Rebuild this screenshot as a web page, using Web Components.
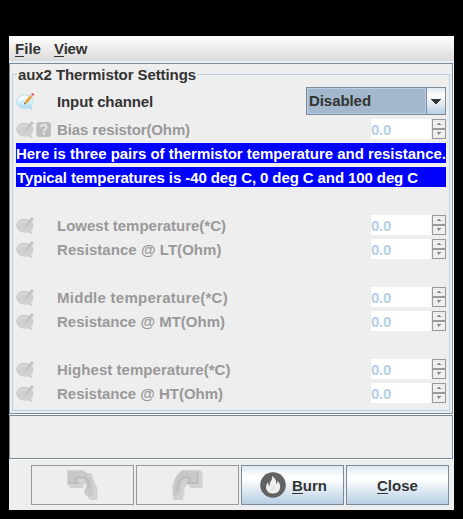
<!DOCTYPE html>
<html lang="en"><head><meta charset="utf-8"><title>aux2 Thermistor Settings</title>
<style>
html,body{margin:0;background:#000}
body{width:463px;height:519px;padding:36px 9px 9px;box-sizing:border-box;font:bold 15px/20px "Liberation Sans",Arial,sans-serif;color:#333;overflow:hidden}
</style></head><body>
<settings-window></settings-window>
<script>
const define = (name, html, setup) => customElements.define(name, class extends HTMLElement {
  connectedCallback() {
    if (this.shadowRoot) return;
    const root = this.attachShadow({mode: 'open'});
    root.innerHTML = html;
    if (setup) setup.call(this, root);
  }
});

// Text run spaced to a given advance width; the "key" attribute underlines the first letter.
define('ui-text', `<style>:host{display:block;white-space:pre}span{display:inline-block}u{text-decoration:none;border-bottom:1px solid currentColor;display:inline-block;line-height:15px}</style><span></span>`, function (root) {
  const s = root.querySelector('span'), t = this.getAttribute('text');
  if (this.hasAttribute('key')) {
    const u = document.createElement('u');
    u.textContent = t[0];
    s.append(u, t.slice(1));
  } else s.textContent = t;
  const w = +this.getAttribute('w');
  s.style.letterSpacing = (w - s.getBoundingClientRect().width) / t.length + 'px';
});

define('note-icon', `<style>:host{display:block;width:20px;height:20px}svg{display:block}</style>
<svg width="20" height="20" viewBox="0 -.6 20 20"></svg>`, function (root) {
  root.querySelector('svg').innerHTML = this.hasAttribute('off')
    ? `<ellipse cx="8.800" cy="10" rx="8.700" ry="7.200" fill="#d0d0d0"/><path d="M10 15L17 12L15.500 15.500L16.500 19L11 16.500Z" fill="#d0d0d0"/><path d="M3 8.500Q6 5 12 6" stroke="#d8d8d8" stroke-width="2" fill="none"/><path d="M8 12.500L9.500 9L15.500 1.500L18 3.500L12 10.500Z" fill="#c6c6c6"/><path d="M9.500 11.500L16 3.500" stroke="#bcbcbc"/>`
    : `<defs><linearGradient id="g" x2="0" y2="1"><stop stop-color="#e8f7fc"/><stop offset=".55" stop-color="#d3effa"/><stop offset="1" stop-color="#a5daf0"/></linearGradient></defs><path d="M11 15L16.500 12.500L15.200 15.500L16.300 18.500L11 16Z" fill="#a9d9ec"/><ellipse cx="8.800" cy="10" rx="8.300" ry="6.800" fill="url(#g)" stroke="#b5dcea" stroke-width=".8"/><path d="M3 9Q6 5 11 6" stroke="#fafeff" stroke-width="2" fill="none"/><path d="M8 12.800L9.200 9.200L14 3.500L16.500 5.500L11.500 11.500Z" fill="#f3b45c"/><path d="M10.800 10.500L15.500 4.700" stroke="#dc8b32"/><path d="M8 12.800L8.600 10.900L10 12Z" fill="#555"/><path d="M14 3.500L15 2.300L17.400 4.300L16.500 5.500Z" fill="#cfdde6"/><path d="M15 2.300Q17 .7 18 2.500Q18.300 3.500 17.400 4.300Z" fill="#e0484f"/>`;
});

define('help-icon', `<style>:host{display:block;width:16px;height:20px}svg{display:block}</style>
<svg width="16" height="20"><rect x=".3" y="3" width="14.700" height="15" rx="3" fill="#bebebe"/><path d="M5 8Q5 5.800 7.700 5.800Q10.500 5.800 10.500 8.200Q10.500 9.700 8.800 10.500Q7.800 11 7.800 12.800" fill="none" stroke="#e3e3e3" stroke-width="2.200"/><rect x="6.700" y="13.800" width="2.300" height="2.200" fill="#e3e3e3"/></svg>`);

define('number-spinner', `<style>
:host{display:grid;grid-template-columns:60px 14px;column-gap:1px;height:20px;color:#b8cfe5}
.f{background:#fff;padding-top:1px;height:19px}
svg{display:block}</style>
<div class="f"><ui-text text="0.0" w="20"></ui-text></div>
<svg width="14" height="20" shape-rendering="crispEdges"><path d="M.5 .5H13.500V19.500H.5ZM0 9.500H14M0 10.500H14" fill="none" stroke="#999"/><path d="M6 4h2v1h1v1H5V5h1ZM5 13h4v1H8v1h-1v1H6v-2H5Z" fill="#888"/></svg>`);

define('field-row', `<style>
:host{display:grid;grid-template-columns:20px 21px 1fr auto;height:20px;color:#999}
ui-text{padding-top:1px}</style>
<note-icon off></note-icon><div class="h"></div><number-spinner></number-spinner>`, function (root) {
  const n = document.createElement('ui-text');
  n.setAttribute('text', this.getAttribute('text'));
  n.setAttribute('w', this.getAttribute('w'));
  root.querySelector('number-spinner').before(n);
  if (this.hasAttribute('help')) root.querySelector('.h').append(document.createElement('help-icon'));
});

define('note-row', `<style>:host{display:block;box-sizing:border-box;height:20px;padding-top:1px;background:#00f;color:#fff}</style><slot></slot>`);

define('combo-box', `<style>
:host{display:grid;grid-template-columns:1fr 19px;box-sizing:border-box;width:140px;height:28px;border:1px solid #7a8a99}
.v{border:1px solid #b8cfe5;background:#a3b8cc;padding:2px 0 0 1px}
.a{border-left:1px solid #7a8a99;background:linear-gradient(#dfe9f2,#fff 30%,#fff 32%,#b8cfe5);display:grid;place-items:center}
svg{display:block}</style>
<div class="v"><slot></slot></div><div class="a"><svg width="10" height="5" shape-rendering="crispEdges"><path d="M0 0h10v1H9v1H8v1H7v1H6v1H4V4H3V3H2V2H1V1H0Z" fill="#333"/></svg></div>`);

define('group-box', `<style>
:host{display:block;box-sizing:border-box;border:1px solid #b8cfe5;height:337px;padding:0 3px}
header{width:180px;height:20px;margin:-9px 0 0 1px;padding-left:1px;background:#eee;box-sizing:border-box;line-height:18px}
main{display:flex;flex-direction:column;gap:4px;padding-top:1px}</style>
<header><slot name="title"></slot></header><main><slot></slot></main>`);

define('etched-panel', `<style>
:host{display:block;box-sizing:border-box;border:1px solid #7a8a99;margin-right:1px;box-shadow:1px 1px 0 #fff}
</style><slot></slot>`);

define('push-button', `<style>
:host{display:flex;align-items:center;justify-content:center;box-sizing:border-box;height:40px;border:1px solid #7a8a99;background:linear-gradient(#dfe9f2,#fff 30%,#fff 34%,#b8cfe5)}
:host([off]){border-color:#999;background:#eee}</style><slot></slot>`);

define('settings-window', `<style>
:host{display:flex;flex-direction:column;width:445px;height:474px;background:#eee}
nav{height:26px;box-sizing:border-box;padding:3px 6px 0;display:flex;gap:13px;background:linear-gradient(#fff,#dadada);border-bottom:1px solid #ededed;margin-bottom:1px}
.main{height:351px;padding:10px 2px 0 2px;box-sizing:border-box}
.status{height:44px;margin-top:1px}
.first{display:grid;grid-template-columns:41px 1fr auto;height:28px;align-items:center}
.first>ui-text,push-button ui-text{padding-top:2px}
.gap{height:20px}
footer{display:grid;grid-template-columns:repeat(4,103px);gap:2px;margin:6px 0 0 22px}
svg{display:block}
</style>
<nav><ui-text key text="File" w="26"></ui-text><ui-text key text="View" w="33"></ui-text></nav>
<etched-panel class="main"><group-box>
<ui-text slot="title" text="aux2 Thermistor Settings" w="178"></ui-text>
<div class="first"><note-icon></note-icon><ui-text text="Input channel" w="96"></ui-text><combo-box><ui-text text="Disabled" w="62"></ui-text></combo-box></div>
<field-row help text="Bias resistor(Ohm)" w="133"></field-row>
<note-row><ui-text text="Here is three pairs of thermistor temperature and resistance." w="430"></ui-text></note-row>
<note-row><ui-text style="padding-left:1px" text="Typical temperatures is -40 deg C, 0 deg C and 100 deg C" w="401"></ui-text></note-row>
<div class="gap"></div>
<field-row text="Lowest temperature(*C)" w="169"></field-row>
<field-row text="Resistance @ LT(Ohm)" w="164.500"></field-row>
<div class="gap"></div>
<field-row text="Middle temperature(*C)" w="171"></field-row>
<field-row text="Resistance @ MT(Ohm)" w="168"></field-row>
<div class="gap"></div>
<field-row text="Highest temperature(*C)" w="173.500"></field-row>
<field-row text="Resistance @ HT(Ohm)" w="166"></field-row>
</group-box></etched-panel>
<etched-panel class="status"></etched-panel>
<footer>
<push-button off><svg width="32" height="32" viewBox="-.5 -1 32 32"><path d="M0 0H15L20 3H24L26 9L28 15L30 18V30H23L17 24V19H19V14H16V18H3L0 15Z" fill="#d2d2d2"/><path d="M0 1H4L7 2L11 1H16Q25 5 25 17L26 26H22L17 22Q21 13 16 8H10V12L12 14H0Z" fill="#c8c8c8"/><path d="M1 13H10L8 10L10 7.500H17Q21 10 22 18" fill="none" stroke="#b9b9b9" stroke-width="1.500"/></svg></push-button>
<push-button off><svg width="32" height="32" viewBox="-.5 -1 32 32"><path d="M9 0H28L30 3V18H18L15 14L12 18V23L10 30H1L0 27V15L4 6Z" fill="#d2d2d2"/><path d="M9 1H17L22 3L24 1H26V14H13L16 11L15 8H12Q8 12 8 18L9 22L5 26H1V16Q2 5 9 1Z" fill="#c8c8c8"/><path d="M25 1V13H15L18 10L16 7.500H11Q4 12 5 21" fill="none" stroke="#b9b9b9" stroke-width="1.500"/></svg></push-button>
<push-button><svg width="26" height="26" viewBox="0 0 26 26" style="margin:0 6px 0 2px"><circle cx="13" cy="13" r="12.800" fill="#626262"/><path d="M12 4Q17 7 16 12Q18 11 17.500 8.500Q21 13 20 16.500Q18.500 21.500 13 21.500Q7 21.500 6 16Q5.700 13 8 10Q8 13 9.700 14Q9 11 11 9Q12.700 7 12 4Z" fill="#eee"/><path d="M13 13Q16 16 14 18.500Q11 19 11 16Q12.500 16 13 13Z" fill="#e2e2e2"/></svg><ui-text key text="Burn" w="35"></ui-text></push-button>
<push-button><ui-text key text="Close" w="41"></ui-text></push-button>
</footer>`);
</script>
</body></html>
